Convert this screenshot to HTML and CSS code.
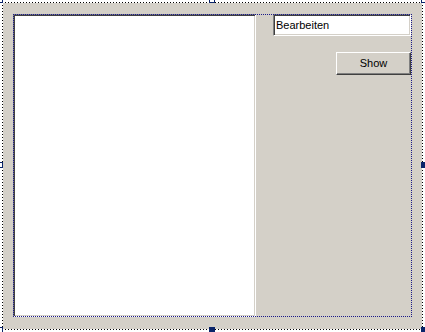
FILE: index.html
```html
<!DOCTYPE html>
<html>
<head>
<meta charset="utf-8">
<link rel="stylesheet" href="styles.css">
</head>
<body>
<div class="stage">
  <div class="frame">
    <div class="form">
      <div class="container">
        <div class="listbox"></div>
        <div class="side">
          <div class="textbox">Bearbeiten</div>
          <div class="button">Show</div>
        </div>
      </div>
    </div>
  </div>
  <div class="h hollow tl"></div>
  <div class="h hollow tm"></div>
  <div class="h hollow tr"></div>
  <div class="h hollow ml"></div>
  <div class="h filled mr"></div>
  <div class="h hollow bl"></div>
  <div class="h filled bm"></div>
  <div class="h filled br"></div>
</div>
</body>
</html>
```
FILE: styles.css
```css
html, body {
  margin: 0;
  padding: 0;
  background: #ffffff;
}
.stage {
  position: relative;
  width: 425px;
  height: 332px;
  overflow: hidden;
  font-family: "Liberation Sans", Arial, sans-serif;
  font-size: 11px;
  color: #000;
}
.frame {
  margin: 2px 0 0 2px;
  width: 421px;
  height: 328px;
  box-sizing: border-box;
  padding: 1px;
  background:
    repeating-linear-gradient(90deg, #000 0 1px, transparent 1px 3px) top left / 100% 1px no-repeat,
    repeating-linear-gradient(90deg, #000 0 1px, transparent 1px 3px) bottom left / 100% 1px no-repeat,
    repeating-linear-gradient(180deg, #000 0 1px, transparent 1px 3px) top left / 1px 100% no-repeat,
    repeating-linear-gradient(180deg, #000 0 1px, transparent 1px 3px) top right / 1px 100% no-repeat;
}
.form {
  width: 419px;
  height: 326px;
  box-sizing: border-box;
  padding: 11px 0 0 10px;
  background: #d4d0c8;
}
.container {
  position: relative;
  display: flex;
  width: 399px;
  height: 303px;
}
.container::after {
  content: "";
  position: absolute;
  inset: 0;
  pointer-events: none;
  background:
    repeating-linear-gradient(90deg, #1a1a8a 0 1px, transparent 1px 2px) top left / 100% 1px no-repeat,
    repeating-linear-gradient(90deg, #1a1a8a 0 1px, transparent 1px 2px) bottom left / 100% 1px no-repeat,
    repeating-linear-gradient(180deg, #1a1a8a 0 1px, transparent 1px 2px) top left / 1px 100% no-repeat,
    repeating-linear-gradient(180deg, #1a1a8a 0 1px, transparent 1px 2px) top right / 1px 100% no-repeat;
}
.listbox {
  width: 243px;
  height: 100%;
  box-sizing: border-box;
  background: #fff;
  border: 1px solid;
  border-color: #808080 #ffffff #ffffff #808080;
  box-shadow: inset 1px 1px #404040, inset -1px -1px #d4d0c8;
}
.side {
  flex: 1;
  display: flex;
  flex-direction: column;
  align-items: flex-end;
  padding-right: 1px;
}
.textbox {
  width: 138px;
  height: 22px;
  box-sizing: border-box;
  background: #fff;
  border: 1px solid;
  border-color: #808080 #ffffff #ffffff #808080;
  box-shadow: inset 1px 1px #404040, inset -1px -1px #d4d0c8;
  padding-left: 2px;
  line-height: 18px;
  padding-top: 1px;
  white-space: nowrap;
}
.button {
  margin-top: 16px;
  width: 75px;
  height: 23px;
  box-sizing: border-box;
  background: #d4d0c8;
  border: 1px solid;
  border-color: #ffffff #404040 #404040 #ffffff;
  box-shadow: inset -1px -1px #808080;
  text-align: center;
  line-height: 21px;
}
.h {
  position: absolute;
  width: 6px;
  height: 6px;
  box-sizing: border-box;
}
.hollow {
  background: #fff;
  border: 1px solid #0a246a;
}
.filled {
  background: #0a246a;
}
.tl { left: -3px; top: -3px; }
.tm { left: 209px; top: -3px; }
.tr { left: 421px; top: -3px; }
.ml { left: -3px; top: 162px; }
.mr { left: 421px; top: 162px; }
.bl { left: -3px; top: 327px; }
.bm { left: 209px; top: 327px; }
.br { left: 421px; top: 327px; }
```
